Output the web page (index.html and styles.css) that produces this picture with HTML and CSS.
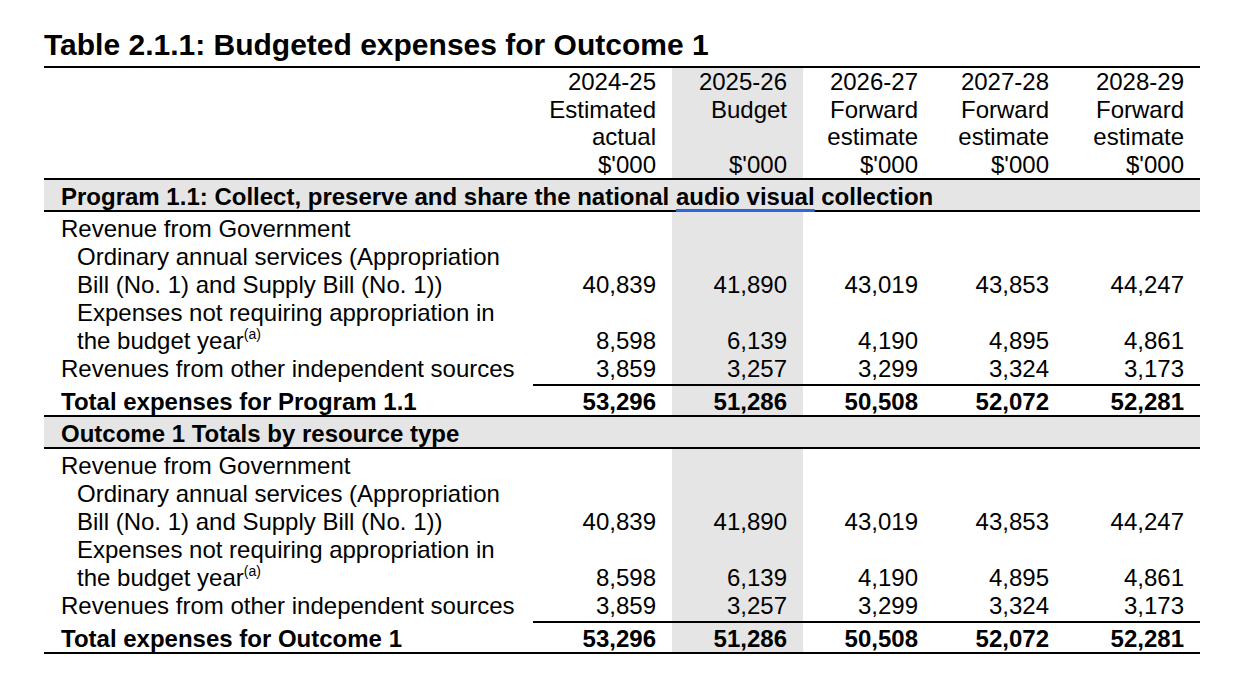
FILE: index.html
```html
<!DOCTYPE html>
<html lang="en">
<head>
<meta charset="utf-8">
<title>Table 2.1.1: Budgeted expenses for Outcome 1</title>
<link rel="stylesheet" href="styles.css">
</head>
<body>
<div class="page">
  <h1 class="title">Table 2.1.1: Budgeted expenses for Outcome 1</h1>
  <table class="budget">
    <colgroup>
      <col class="c-label">
      <col class="c-first">
      <col class="c-num">
      <col class="c-num">
      <col class="c-num">
      <col class="c-last">
    </colgroup>
    <thead>
      <tr>
        <th class="label"></th>
        <th class="num">2024-25<br>Estimated<br>actual<br>$'000</th>
        <th class="num shade">2025-26<br>Budget<br><br>$'000</th>
        <th class="num">2026-27<br>Forward<br>estimate<br>$'000</th>
        <th class="num">2027-28<br>Forward<br>estimate<br>$'000</th>
        <th class="num">2028-29<br>Forward<br>estimate<br>$'000</th>
      </tr>
    </thead>
    <tbody>
      <tr class="section"><td colspan="6">Program 1.1: Collect, preserve and share the national <span class="spell">audio visual</span> collection</td></tr>
      <tr class="first">
        <td class="label l1">Revenue from Government</td>
        <td class="num"></td><td class="num shade"></td><td class="num"></td><td class="num"></td><td class="num"></td>
      </tr>
      <tr>
        <td class="label l2">Ordinary annual services (Appropriation<br>Bill (No. 1) and Supply Bill (No. 1))</td>
        <td class="num">40,839</td><td class="num shade">41,890</td><td class="num">43,019</td><td class="num">43,853</td><td class="num">44,247</td>
      </tr>
      <tr>
        <td class="label l2">Expenses not requiring appropriation in<br>the budget year<sup>(a)</sup></td>
        <td class="num">8,598</td><td class="num shade">6,139</td><td class="num">4,190</td><td class="num">4,895</td><td class="num">4,861</td>
      </tr>
      <tr class="last">
        <td class="label l1">Revenues from other independent sources</td>
        <td class="num">3,859</td><td class="num shade">3,257</td><td class="num">3,299</td><td class="num">3,324</td><td class="num">3,173</td>
      </tr>
      <tr class="total">
        <td class="label l1">Total expenses for Program 1.1</td>
        <td class="num">53,296</td><td class="num shade">51,286</td><td class="num">50,508</td><td class="num">52,072</td><td class="num">52,281</td>
      </tr>
      <tr class="section"><td colspan="6">Outcome 1 Totals by resource type</td></tr>
      <tr class="first">
        <td class="label l1">Revenue from Government</td>
        <td class="num"></td><td class="num shade"></td><td class="num"></td><td class="num"></td><td class="num"></td>
      </tr>
      <tr>
        <td class="label l2">Ordinary annual services (Appropriation<br>Bill (No. 1) and Supply Bill (No. 1))</td>
        <td class="num">40,839</td><td class="num shade">41,890</td><td class="num">43,019</td><td class="num">43,853</td><td class="num">44,247</td>
      </tr>
      <tr>
        <td class="label l2">Expenses not requiring appropriation in<br>the budget year<sup>(a)</sup></td>
        <td class="num">8,598</td><td class="num shade">6,139</td><td class="num">4,190</td><td class="num">4,895</td><td class="num">4,861</td>
      </tr>
      <tr class="last">
        <td class="label l1">Revenues from other independent sources</td>
        <td class="num">3,859</td><td class="num shade">3,257</td><td class="num">3,299</td><td class="num">3,324</td><td class="num">3,173</td>
      </tr>
      <tr class="total">
        <td class="label l1">Total expenses for Outcome 1</td>
        <td class="num">53,296</td><td class="num shade">51,286</td><td class="num">50,508</td><td class="num">52,072</td><td class="num">52,281</td>
      </tr>
    </tbody>
  </table>
</div>
</body>
</html>
```
FILE: styles.css
```css
html, body {
  margin: 0;
  padding: 0;
  background: #ffffff;
}

body {
  font-family: "Liberation Sans", Arial, sans-serif;
  color: #000000;
}

.page {
  padding-left: 44px;
  width: 1156px;
}

.title {
  margin: 0;
  padding: 28px 0 4px 0;
  font-size: 30px;
  line-height: 34px;
  font-weight: bold;
  border-bottom: 2px solid #000000;
}

.budget {
  width: 1156px;
  border-collapse: separate;
  border-spacing: 0;
  table-layout: fixed;
  font-size: 24px;
}

.c-label { width: 489px; }
.c-first { width: 139px; }
.c-num { width: 131px; }
.c-last { width: 135px; }

.budget th,
.budget td {
  padding: 0;
  font-weight: normal;
  white-space: nowrap;
}

.budget thead th {
  line-height: 27.5px;
  vertical-align: bottom;
  border-bottom: 2px solid #000000;
}

.budget .num {
  text-align: right;
  padding-right: 16px;
  vertical-align: bottom;
}

.budget .shade {
  background: #e5e5e5;
}

.budget .label {
  text-align: left;
  vertical-align: bottom;
}

.budget .l1 { padding-left: 17px; }
.budget .l2 { padding-left: 33px; }

.budget tbody td {
  line-height: 28px;
}

.budget .section td {
  background: #e5e5e5;
  font-weight: bold;
  padding: 4px 0 0 17px;
  line-height: 26px;
  border-bottom: 2px solid #000000;
}

.budget .first td {
  padding-top: 3px;
}

.budget .last td {
  padding-bottom: 1px;
}

.budget .total td {
  font-weight: bold;
  padding-top: 2px;
  line-height: 27px;
  border-bottom: 2px solid #000000;
  border-top: 2px solid #000000;
}

.budget .total td.label {
  border-top-color: transparent;
}

.spell {
  text-decoration: underline;
  text-decoration-color: #2f66dc;
  text-decoration-thickness: 3px;
  text-underline-offset: 4px;
  text-decoration-skip-ink: none;
}

sup {
  font-size: 14px;
  line-height: 0;
  vertical-align: 10px;
}
```
